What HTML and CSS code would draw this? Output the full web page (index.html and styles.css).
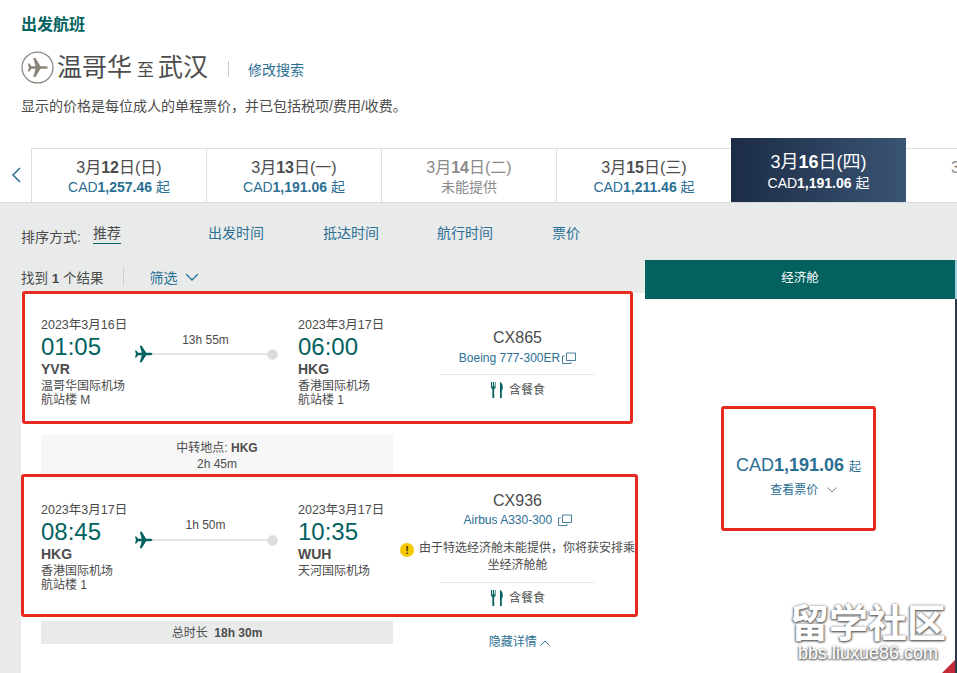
FILE: index.html
```html
<!DOCTYPE html>
<html lang="zh-CN">
<head>
<meta charset="utf-8">
<title>出发航班</title>
<link rel="stylesheet" href="styles.css">
</head>
<body>
<svg class="sprite" width="0" height="0" aria-hidden="true">
  <symbol id="plane" viewBox="0 0 24 24"><path d="M23.500 12c0-.9-1.500-1.500-3.200-1.500h-5L9.800 1.500H7.300l2.500 9H5.300L3 7.500H1.200L2.500 12l-1.300 4.500H3l2.300-3h4.500l-2.500 9h2.500l5.500-9h5c1.700 0 3.200-.6 3.200-1.500z"/></symbol>
  <symbol id="meal" viewBox="0 0 14 18"><path d="M1 1v5c0 1 .6 1.700 1.400 2v9h1.800V8c.8-.3 1.400-1 1.400-2V1H4.800v4.500H4V1H2.800v4.500H2V1zM10 1c1.800.5 2.800 2.600 2.800 5.500 0 1.500-.4 2.500-1 3V17H10z"/></symbol>
  <symbol id="ext" viewBox="0 0 14 12"><path d="M4.500 1h9v7.500h-9zM2.800 4H.5v7.500h8.500V10" fill="none" stroke="currentColor"/></symbol>
</svg>

<header class="head">
  <h1 class="title">出发航班</h1>
  <div class="route">
    <svg class="route-icon" viewBox="0 0 32 32"><circle cx="16" cy="16" r="15" fill="none" stroke="#8c857b" stroke-width="1.200"/><svg x="5.500" y="5.500" width="21" height="21" fill="#8c857b"><use href="#plane"/></svg></svg>
    <span class="city">温哥华</span><span class="to">至</span><span class="city">武汉</span>
    <span class="route-sep"></span>
    <a class="modify">修改搜索</a>
  </div>
  <p class="note">显示的价格是每位成人的单程票价，并已包括税项/费用/收费。</p>
</header>

<nav class="dates">
  <span class="prev"><svg width="12" height="18" viewBox="0 0 12 18"><path d="M10 2 3 9l7 7" fill="none" stroke="#2b6f94" stroke-width="1.500"/></svg></span>
  <div class="date"><b class="d">3月<i>12</i>日(日)</b><span class="p">CAD<b>1,257.46</b> 起</span></div>
  <div class="date"><b class="d">3月<i>13</i>日(一)</b><span class="p">CAD<b>1,191.06</b> 起</span></div>
  <div class="date off"><b class="d">3月<i>14</i>日(二)</b><span class="p">未能提供</span></div>
  <div class="date"><b class="d">3月<i>15</i>日(三)</b><span class="p">CAD<b>1,211.46</b> 起</span></div>
  <div class="date on"><b class="d">3月<i>16</i>日(四)</b><span class="p">CAD<b>1,191.06</b> 起</span></div>
  <div class="date peek"><b class="d">3月<i>17</i>日(五)</b></div>
</nav>

<main class="results">
  <div class="sort">
    <span class="sort-label">排序方式:</span>
    <span class="sort-on">推荐</span>
    <a class="s1">出发时间</a><a class="s2">抵达时间</a><a class="s3">航行时间</a><a class="s4">票价</a>
  </div>
  <div class="cols">
    <section class="left">
      <div class="found">
        <span>找到 <b>1</b> 个结果</span><span class="found-sep"></span>
        <a class="filter">筛选</a>
        <svg class="filter-chev" width="14" height="8" viewBox="0 0 14 8"><path d="m1 1 6 6 6-6" fill="none" stroke="#2b6f94" stroke-width="1.300"/></svg>
      </div>
      <div class="list">
        <article class="flight f1">
          <div class="pt"><div class="dt">2023年3月16日</div><div class="tm">01:05</div><div class="code">YVR</div><div class="ap">温哥华国际机场</div><div class="ap">航站楼 M</div></div>
          <div class="seg">
            <svg class="seg-plane"><use href="#plane"/></svg>
            <div class="track"><span class="dur">13h 55m</span><span class="line"></span><span class="dot"></span></div>
          </div>
          <div class="pt"><div class="dt">2023年3月17日</div><div class="tm">06:00</div><div class="code">HKG</div><div class="ap">香港国际机场</div><div class="ap">航站楼 1</div></div>
          <div class="info">
            <div class="fno">CX865</div>
            <a class="craft">Boeing 777-300ER<svg class="ext"><use href="#ext"/></svg></a>
            <div class="meal"><svg class="fork"><use href="#meal"/></svg>含餐食</div>
          </div>
        </article>
        <div class="stop">中转地点: <b>HKG</b><br>2h 45m</div>
        <article class="flight f2">
          <div class="pt"><div class="dt">2023年3月17日</div><div class="tm">08:45</div><div class="code">HKG</div><div class="ap">香港国际机场</div><div class="ap">航站楼 1</div></div>
          <div class="seg">
            <svg class="seg-plane"><use href="#plane"/></svg>
            <div class="track"><span class="dur">1h 50m</span><span class="line"></span><span class="dot"></span></div>
          </div>
          <div class="pt"><div class="dt">2023年3月17日</div><div class="tm">10:35</div><div class="code">WUH</div><div class="ap">天河国际机场</div></div>
          <div class="info">
            <div class="fno">CX936</div>
            <a class="craft">Airbus A330-300 <svg class="ext"><use href="#ext"/></svg></a>
            <div class="warn"><span class="warn-ic">!</span>由于特选经济舱未能提供，你将获安排乘坐经济舱舱</div>
            <div class="meal"><svg class="fork"><use href="#meal"/></svg>含餐食</div>
          </div>
        </article>
        <div class="total">总时长&nbsp; <b>18h 30m</b></div>
        <a class="hide">隐藏详情 <svg width="10" height="6" viewBox="0 0 10 6"><path d="m.5 5.500 4.500-4.500 4.500 4.500" fill="none" stroke="#2b6f94"/></svg></a>
      </div>
    </section>
    <aside class="right">
      <div class="cabin">经济舱</div>
      <div class="cabin-body">
        <div class="fare">
          <div class="fare-price">CAD<b>1,191.06</b> <small>起</small></div>
          <a class="fare-link">查看票价 <svg width="10" height="6" viewBox="0 0 10 6"><path d="m.5.500 4.500 4.500 4.500-4.500" fill="none" stroke="#6f8a99"/></svg></a>
        </div>
      </div>
    </aside>
  </div>
  <div class="mark"><div class="mark-cn">留学社区</div><div class="mark-en">bbs.liuxue86.com</div></div>
  <span class="corner"></span>
</main>
</body>
</html>
```

FILE: styles.css
```css
* { box-sizing: border-box; }
html, body { margin: 0; height: 673px; overflow: hidden; background: #fff; }
body { font-family: "Liberation Sans", "Noto Sans CJK SC", sans-serif; color: #4c4c4c; width: 957px; }
a { color: #2b6f94; }
i { font-style: normal; }
.sprite { position: absolute; }

.head { padding: 16px 0 0 21px; height: 149px; }
.title { margin: 0; font-size: 16px; line-height: 18px; font-weight: 700; color: #03625f; }
.route { display: flex; align-items: center; height: 34px; margin-top: 16px; }
.route-icon { width: 33px; height: 33px; margin-right: 3px; }
.city { font-size: 25px; line-height: 34px; color: #4c4c4c; }
.to { font-size: 17px; margin: 3px 4px 0 5px; }
.route-sep { width: 1px; height: 16px; background: #c9c9c9; margin: 3px 19px 0 20px; }
.modify { font-size: 14px; margin-top: 4px; }
.note { margin: 13px 0 0; font-size: 14px; line-height: 18px; }

.dates { display: flex; align-items: flex-end; height: 54px; border-bottom: 1px solid #d9dcdc; position: relative; }
.prev { width: 31px; height: 54px; display: flex; align-items: center; justify-content: center; padding-left: 1px; }
.date { width: 175px; height: 54px; border: 1px solid #dfe1e1; border-bottom: 0; border-right-width: 0; display: flex; flex-direction: column; align-items: center; padding-top: 10px; background: #fff; flex: none; }
.d { font-size: 16px; line-height: 18px; font-weight: 400; color: #4c4c4c; }
.d i { font-weight: 700; }
.p { font-size: 14px; line-height: 20px; color: #2b6f94; }
.p b { font-weight: 700; }
.off .d, .off .p { color: #8a8a8a; }
.on { height: 64px; border: 0; background: linear-gradient(90deg, #1c2c45, #3a5474); padding-top: 14px; }
.on .d { color: #fff; font-size: 18px; line-height: 21px; }
.on .p { color: #fff; }
.peek { width: 51px; overflow: hidden; align-items: flex-start; padding-left: 45px; border-left: 0; }
.peek .d { white-space: nowrap; color: #8a8a8a; }

.results { position: relative; background: #e9ebeb; height: 470px; }
.sort { position: relative; height: 57px; font-size: 14px; }
.sort-label { position: absolute; left: 21px; top: 23px; }
.sort-on { position: absolute; left: 93px; top: 21px; padding-bottom: 1px; border-bottom: 1px solid #03625f; line-height: 18px; }
.sort a { position: absolute; top: 21px; line-height: 18px; }
.s1 { left: 208px; } .s2 { left: 323px; } .s3 { left: 437px; } .s4 { left: 552px; }

.cols { display: grid; grid-template-columns: 645px 312px; height: 413px; }
.left { display: flex; flex-direction: column; }
.found { display: flex; align-items: center; height: 33px; padding-left: 21px; font-size: 13.500px; }
.found-sep { width: 1px; height: 19px; background: #cfd2d2; margin: 0 26px 0 19px; }
.filter { font-size: 14px; }
.filter-chev { margin-left: 7px; }
.list { flex: 1; margin-left: 21px; background: #fff; position: relative; }

.flight { display: grid; align-items: start; border: 3px solid #e62a1f; border-radius: 3px; background: #fff; grid-template-columns: 93px 164px 142px 155px; }
.f1 { width: 611px; height: 133px; margin: -2px 0 0 1px; padding: 23px 0 0 16px; }
.f2 { width: 617px; height: 143px; margin: -2px 0 0 0; padding: 25px 0 0 17px; }
.dt { font-size: 12.500px; line-height: 16px; white-space: nowrap; }
.tm { font-size: 24px; line-height: 28px; color: #03625f; }
.code { font-size: 14px; line-height: 16px; font-weight: 700; }
.ap { font-size: 12px; line-height: 14px; white-space: nowrap; }
.code + .ap { margin-top: 2px; }
.seg { display: flex; padding-top: 27px; }
.f2 .seg { padding-top: 28px; }
.seg-plane { width: 19px; height: 20px; fill: #03625f; flex: none; }
.track { position: relative; width: 125px; height: 20px; }
.dur { position: absolute; left: 0; width: 105px; top: -12px; text-align: center; font-size: 12px; line-height: 16px; }
.f2 .dur { top: -13px; }
.line { position: absolute; left: 0; right: 9px; top: 9px; height: 2px; background: #e6e6e6; }
.dot { position: absolute; right: 0; top: 5px; width: 11px; height: 11px; border-radius: 50%; background: #dcdcdc; border: 1px solid #e6e6e6; }

.info { display: flex; flex-direction: column; align-items: center; width: 155px; }
.fno { font-size: 16px; line-height: 20px; margin-top: 11px; }
.f2 .info { margin-top: -22px; }
.craft { display: flex; align-items: center; font-size: 12px; line-height: 16px; white-space: pre; margin-top: 2px; }
.f2 .craft { margin-top: 1px; }
.ext { width: 14px; height: 12px; margin-left: 2px; color: #4a7f9c; }
.warn { width: 238px; flex: none; margin: 12px 0 0; font-size: 12px; line-height: 16px; text-align: center; align-self: center; }
.warn-ic { display: inline-block; width: 14px; height: 14px; border-radius: 50%; background: #f5c800; color: #4c3b00; font-size: 11px; line-height: 14px; font-weight: 700; text-align: center; margin-right: 5px; vertical-align: -2px; }
.meal { width: 155px; display: flex; align-items: center; justify-content: center; border-top: 1px solid #e6e6e6; margin-top: 8px; padding-top: 6px; font-size: 12px; line-height: 18px; }
.f2 .meal { margin-top: 9px; }
.fork { width: 14px; height: 18px; fill: #03625f; margin-right: 5px; }

.stop { margin: 11px 0 0 20px; width: 352px; height: 41px; background: #f7f7f7; text-align: center; font-size: 12px; line-height: 16px; padding-top: 5px; }
.total { margin: 4px 0 0 20px; width: 352px; height: 23px; background: #e9ebeb; text-align: center; font-size: 12px; line-height: 24px; }
.hide { display: block; width: 155px; margin: -11px 0 0 421px; text-align: center; font-size: 12px; line-height: 18px; }

.right { display: flex; flex-direction: column; }
.cabin { width: 312px; height: 39px; background: #03625f; border-right: 2px solid #9fd0d8; color: #fff; font-size: 12.500px; line-height: 36px; text-align: center; }
.cabin-body { flex: 1; width: 312px; background: #fff; border-right: 2px solid #2c3848; padding: 107px 0 0 76px; }
.fare { width: 155px; height: 125px; border: 3px solid #e62a1f; border-radius: 3px; display: flex; flex-direction: column; align-items: center; padding-top: 45px; }
.fare-price { font-size: 18px; line-height: 22px; color: #2b6f94; white-space: nowrap; }
.fare-price small { font-size: 12px; }
.fare-link { font-size: 12px; line-height: 18px; margin: 3px 0 0 10px; }
.fare-link svg { margin-left: 5px; vertical-align: 1px; }

.mark { position: absolute; left: 788px; top: 400px; width: 160px; color: #fff; text-align: center; text-shadow: 1px 1px 2px #666, -1px 1px 2px #888, 0 0 3px #999; }
.mark-cn { font-size: 39px; line-height: 42px; font-weight: 700; white-space: nowrap; }
.mark-en { font-size: 18px; line-height: 16px; white-space: nowrap; }
.corner { position: absolute; right: 2px; bottom: 0; width: 0; height: 0; border-left: 13px solid transparent; border-bottom: 13px solid #c22a37; }
```
